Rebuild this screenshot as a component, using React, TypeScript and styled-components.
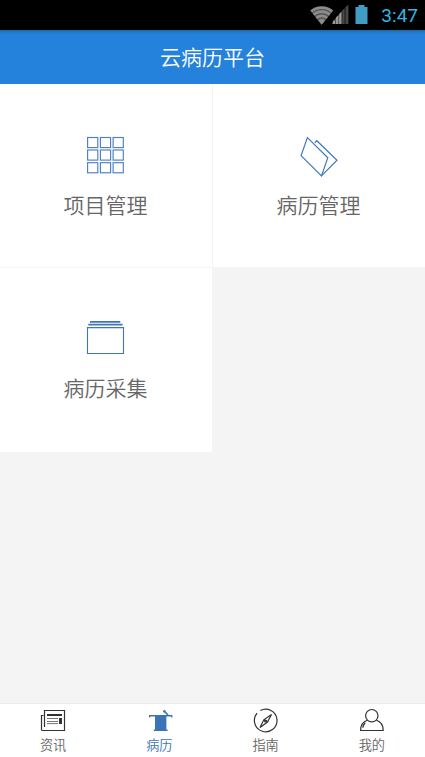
import React from 'react';
import styled, { createGlobalStyle } from 'styled-components';

const GlobalStyle = createGlobalStyle`
  * { box-sizing: border-box; }
  body { margin: 0; background: #f4f4f4; }
`;

const Screen = styled.div`
  width: 425px;
  height: 757px;
  display: flex;
  flex-direction: column;
  overflow: hidden;
  background: #f4f4f4;
  font-family: "Noto Sans CJK SC", sans-serif;
  svg { display: block; }
`;

const StatusBar = styled.div`
  height: 30px;
  flex: none;
  display: flex;
  align-items: center;
  justify-content: flex-end;
  padding-right: 7px;
  background: #000;
`;

const Clock = styled.span`
  margin-left: 12px;
  padding-top: 1px;
  font: 400 19px/29px Roboto, sans-serif;
  color: #33b5e5;
`;

const Header = styled.header`
  height: 54px;
  flex: none;
  display: flex;
  justify-content: center;
  background: linear-gradient(#1c639f 0, #2279cb 2px, #2582dc 6px, #2582dc 100%);
  color: #fff;
`;

const Title = styled.h1`
  margin: 0;
  font-size: 21px;
  line-height: 53px;
  font-weight: 350;
`;

const Grid = styled.main`
  flex: 1;
  display: grid;
  grid-template-columns: 212px 212px;
  grid-template-rows: 183px 184px;
  gap: 1px;
  align-content: start;
`;

const Tile = styled.div`
  display: flex;
  flex-direction: column;
  align-items: center;
  padding-top: 48px;
  background: #fff;
`;

const TileLabel = styled.span<{ $gap: number }>`
  margin: ${(p) => p.$gap}px 1px 0 0;
  font-size: 21px;
  line-height: 30px;
  font-weight: 350;
  color: #666;
`;

const TabBar = styled.nav`
  height: 54px;
  flex: none;
  display: grid;
  grid-template-columns: repeat(4, 1fr);
  border-top: 1px solid #ececec;
  background: #fff;
`;

const Tab = styled.div<{ $active?: boolean }>`
  display: flex;
  flex-direction: column;
  align-items: center;
  padding-top: 2px;
  color: ${(p) => (p.$active ? '#3b73b9' : '#666')};
`;

const TabLabel = styled.span`
  margin-top: 1px;
  font-size: 13.2px;
  line-height: 20px;
  font-weight: 350;
`;

const StatusIcons = () => (
  <svg width="60" height="24" viewBox="310 3 60 24">
    <defs>
      <clipPath id="fan">
        <path d="M310.5 9.5Q322.5 1 335 9.5L322.7 24.5Z" />
      </clipPath>
    </defs>
    <g clipPath="url(#fan)" fill="#555" stroke="#8c8c8c" strokeWidth="2.8">
      <circle cx="322.7" cy="24" r="16.4" />
      <circle cx="322.7" cy="24" r="12.3" />
      <circle cx="322.7" cy="24" r="8.2" />
      <circle cx="322.7" cy="24" r="2.5" strokeWidth="5" />
    </g>
    <path d="M334 21L342.5 12V24H333.5z" fill="#555" />
    <path d="M334 20.8h2V24h-2.5zM337 17.5l2.2-2.3V24H337zM340.2 14l2.3-2.5V24h-2.3z" fill="#999" />
    <path d="M343.2 10.6l2.5-2.3V24h-2.5zM346.4 7.2l3-2.4V24h-3z" fill="#484848" />
    <path d="M359.5 5h6v2h3v17h-12V7h3z" fill="#419dc4" />
  </svg>
);

const ProjectIcon = () => (
  <svg width="46" height="46" viewBox="83 132 46 46" fill="none" stroke="#4b80c4" strokeWidth="1.15">
    {[137.5, 150, 162.7].map((y) =>
      [87.6, 100.4, 113.1].map((x) => <rect key={`${x}-${y}`} x={x} y={y} width="10.2" height="10.1" />),
    )}
  </svg>
);

const RecordIcon = () => (
  <svg width="46" height="46" viewBox="296 132 46 46" fill="none" stroke="#4079c2" strokeWidth="1.2">
    <path d="M307.4 137.6L327.8 157.7 321.5 175.9 301.1 155.6z" />
    <path d="M314.7 142.7L316.8 140.7 337 160.2 321.5 175.9" />
  </svg>
);

const CollectIcon = () => (
  <svg width="46" height="46" viewBox="83 316 46 46" fill="none" stroke="#3f76ba">
    <path d="M90 321.8h30.3M88.3 324.7h34.3" strokeWidth="1.7" />
    <path d="M87.5 327.6h36v25.9h-36z" strokeWidth="1.1" />
  </svg>
);

const NewsIcon = () => (
  <svg width="28" height="28" viewBox="39 706 28 28" fill="none" stroke="#333">
    <path d="M44.5 727v-16.5h20v20H42.5q-1 0-1-1v-14h2" strokeWidth="1.2" />
    <path d="M47 715h15" strokeWidth="2" />
    <path d="M47 718.5h11M47 721.5h11M47 723.6h11" stroke="#777" />
    <path d="M59 718h3v6h-3z" fill="#333" stroke="none" />
  </svg>
);

const CaseIcon = () => (
  <svg width="28" height="28" viewBox="145 706 28 28">
    <path d="M149 715h23.4v2.4h-1.2v-1h-4.8v13.2h1.2v1.4h-13.8v-1.4h1.2v-13.2h-4.8v1H149z" fill="#3b73b9" />
    <path d="M164 711l4 4" stroke="#3b73b9" strokeWidth="1.7" />
    <circle cx="164.3" cy="711.2" r="1.2" fill="#3b73b9" />
  </svg>
);

const CompassIcon = () => (
  <svg width="28" height="28" viewBox="252 706 28 28" fill="none" stroke="#333" strokeWidth="1.2">
    <path d="M260.3 710.5a11.3 11.3 0 1 1-3.2 2.6" />
    <path d="M271.5 714.5l-4 7.5-7.5 5.5 3.8-7.7z M263.8 719.8l3.7 2.2" />
    <circle cx="265.6" cy="721" r="1" />
  </svg>
);

const PersonIcon = () => (
  <svg width="28" height="28" viewBox="358 706 28 28" fill="none" stroke="#333" strokeWidth="1.2">
    <circle cx="371.8" cy="715.7" r="6.2" />
    <path d="M367.4 720.3c-4.3 1.4-6.8 5.5-6.8 10.2h22.6c0-4.7-2.5-8.8-6.8-10.2" />
    <path d="M362.8 727.8c.2-2.2 1.2-3.8 2.5-5" />
  </svg>
);

const tiles = [
  { label: '项目管理', Icon: ProjectIcon, gap: 11 },
  { label: '病历管理', Icon: RecordIcon, gap: 11 },
  { label: '病历采集', Icon: CollectIcon, gap: 10 },
];

const tabs = [
  { label: '资讯', Icon: NewsIcon },
  { label: '病历', Icon: CaseIcon, active: true },
  { label: '指南', Icon: CompassIcon },
  { label: '我的', Icon: PersonIcon },
];

export default function App() {
  return (
    <Screen>
      <GlobalStyle />
      <StatusBar>
        <StatusIcons />
        <Clock>3:47</Clock>
      </StatusBar>
      <Header>
        <Title>云病历平台</Title>
      </Header>
      <Grid>
        {tiles.map(({ label, Icon, gap }) => (
          <Tile key={label}>
            <Icon />
            <TileLabel $gap={gap}>{label}</TileLabel>
          </Tile>
        ))}
      </Grid>
      <TabBar>
        {tabs.map(({ label, Icon, active }) => (
          <Tab key={label} $active={active}>
            <Icon />
            <TabLabel>{label}</TabLabel>
          </Tab>
        ))}
      </TabBar>
    </Screen>
  );
}
